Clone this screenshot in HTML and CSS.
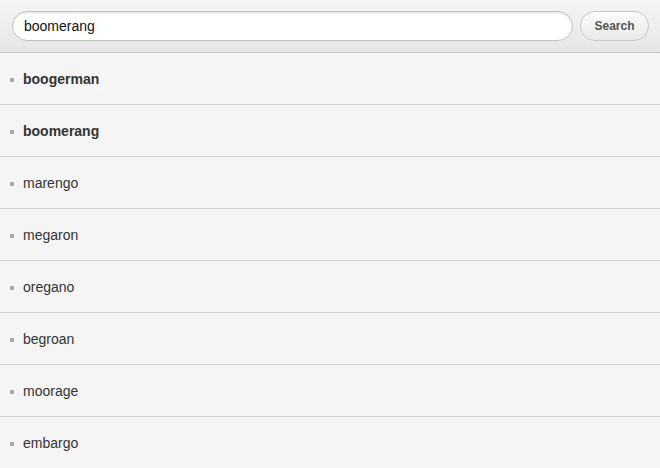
FILE: index.html
```html
<!DOCTYPE html>
<html>
<head>
<meta charset="utf-8">
<link rel="stylesheet" href="styles.css">
</head>
<body>
<div class="bar">
  <div class="field">boomerang</div>
  <button class="btn">Search</button>
</div>
<ul class="list">
  <li class="item first bold">boogerman</li>
  <li class="item bold">boomerang</li>
  <li class="item">marengo</li>
  <li class="item">megaron</li>
  <li class="item">oregano</li>
  <li class="item">begroan</li>
  <li class="item">moorage</li>
  <li class="item">embargo</li>
</ul>
</body>
</html>
```
FILE: styles.css
```css
html, body {
  margin: 0;
  padding: 0;
  background: #f5f5f5;
  font-family: "Liberation Sans", Arial, sans-serif;
  overflow: hidden;
}
.bar {
  height: 53px;
  box-sizing: border-box;
  border-bottom: 1px solid #c6c6c6;
  background: linear-gradient(#f5f5f5, #e6e6e6);
  display: flex;
  align-items: center;
  padding: 0 11px 0 12px;
  gap: 7px;
}
.field {
  flex: 1;
  height: 30px;
  box-sizing: border-box;
  border: 1px solid #c2c2c2;
  border-radius: 15px;
  background: #fff;
  box-shadow: inset 0 1px 2px rgba(0,0,0,0.12);
  padding: 0 11px;
  font-size: 14px;
  line-height: 28px;
  color: #111;
}
.btn {
  width: 69px;
  height: 30px;
  border: 1px solid #c8c8c8;
  border-radius: 15px;
  background: linear-gradient(#fbfbfb, #e9e9e9);
  font-family: "Liberation Sans", Arial, sans-serif;
  font-weight: bold;
  font-size: 12px;
  color: #555;
  padding: 0;
}
.list {
  list-style: none;
  margin: 0;
  padding: 0;
}
.item {
  height: 52px;
  box-sizing: border-box;
  border-top: 1px solid #d0d0d0;
  display: flex;
  align-items: center;
  padding-left: 23px;
  position: relative;
  font-size: 14px;
  color: #333;
}
.item.first {
  height: 51px;
  border-top: none;
  padding-top: 1px;
}
.item::before {
  content: "";
  position: absolute;
  left: 10px;
  top: 50%;
  width: 4px;
  height: 4px;
  margin-top: -1px;
  background: #aaa;
}
.bold {
  font-weight: bold;
}
```
